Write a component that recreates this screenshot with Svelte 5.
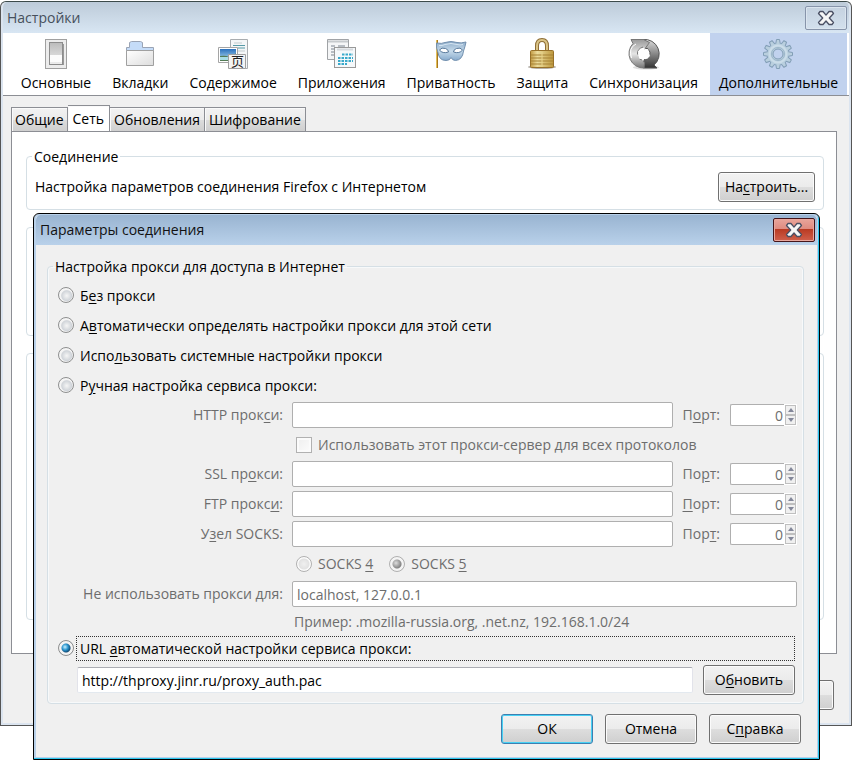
<script>
	const panes = [
		{ id: "general", label: "Основные" },
		{ id: "tabs", label: "Вкладки" },
		{ id: "content", label: "Содержимое" },
		{ id: "apps", label: "Приложения" },
		{ id: "privacy", label: "Приватность" },
		{ id: "security", label: "Защита" },
		{ id: "sync", label: "Синхронизация" },
		{ id: "advanced", label: "Дополнительные" },
	];
	const tabs = ["Общие", "Сеть", "Обновления", "Шифрование"];

	// labels are split in three so the access key can be underlined
	const modes = [
		{ value: "none", text: ["Б", "е", "з прокси"] },
		{ value: "detect", text: ["А", "в", "томатически определять настройки прокси для этой сети"] },
		{ value: "system", text: ["Испо", "л", "ьзовать системные настройки прокси"] },
		{ value: "manual", text: ["Р", "у", "чная настройка сервиса прокси:"] },
	];
	const hosts = [
		{ id: "http", text: ["HTTP прок", "с", "и:"], port: ["П", "о", "рт:"] },
		{ id: "ssl", text: ["SSL пр", "о", "кси:"], port: ["По", "р", "т:"] },
		{ id: "ftp", text: ["FTP прокс", "и", ":"], port: ["", "П", "орт:"] },
		{ id: "socks", text: ["У", "з", "ел SOCKS:"], port: ["Пор", "т", ":"] },
	];
	const teeth = [0, 30, 60, 90, 120, 150, 180, 210, 240, 270, 300, 330];

	let pane = $state("advanced");
	let tab = $state("Сеть");
	let mode = $state("url");
	let socks = $state("5");
	let url = $state("http://thproxy.jinr.ru/proxy_auth.pac");
	let manual = $derived(mode === "manual");
</script>

{#snippet keyed(t)}{t[0]}<u>{t[1]}</u>{t[2]}{/snippet}

{#snippet cross()}
	<svg width="20" height="16" viewBox="0 0 20 16" aria-hidden="true">
		<path d="M4 1.5h3l3 3.6 3-3.6h3l1.500 2L13.300 8l4.200 4.500-1.500 2h-3L10 11l-3 3.500H4l-1.500-2L6.700 8 2.500 3.500z" fill="#f6f6f6" stroke="#4b5064" stroke-width="1.300" stroke-linejoin="round" />
	</svg>
{/snippet}

{#snippet icon(id)}
	<svg width="34" height="32" viewBox="0 0 34 32" aria-hidden="true">
		{#if id === "general"}
			<rect x="6.500" y="1.500" width="21" height="29" fill="#ececec" stroke="#a0a0a0" />
			<path d="M12 6h13v21H12z" fill="#999" />
			<rect x="10.500" y="4.500" width="13" height="22" fill="url(#sw)" stroke="#8c8c8c" />
			<path d="M11 17h12v7H11z" fill="#fcfcfc" />
		{:else if id === "tabs"}
			<path d="M3.500 16V9.500h3v-5l2-1h9l2 1v5h11V16z" fill="#c5dcf8" stroke="#9aa4b5" />
			<path d="M3.500 12.500h27v15h-27z" fill="url(#paper)" stroke="#a0a0a0" />
		{:else if id === "content"}
			<path d="M14.500 1.500h17v29h-17z" fill="#f4f6f7" stroke="#a9adb0" />
			<path d="M18 5h8M17 13h12" stroke="#c3cccf" />
			<path d="M17 7.500h12M22 10h7" stroke="#579aa6" />
			<path d="M2.500 9.500h19v15h-19z" fill="#fff" stroke="#a5a5a5" />
			<path d="M4 11h16v12H4z" fill="url(#sky)" />
			<path d="M4 18q6-1 9 1t7-4v8H4z" fill="#527b55" />
			<path d="M4 19h9l3 3H4z" fill="#a7dce5" />
			<path d="M12.500 16.500h17v14h-17z" fill="#f4f4f4" stroke="#a0a0a0" />
			<text x="15" y="28" class="glyph">页</text>
		{:else if id === "apps"}
			<path d="M2.500 1.500h21v20h-21z" fill="#f5f6f7" stroke="#a0a3a6" />
			<path d="M3 3.500h20" stroke="#c6cacd" stroke-width="2" />
			<path d="M6 8h4M13 8h7M6 11h4M6 14h3M6 17h3" stroke="#7a8490" />
			<rect x="9.500" y="9.500" width="21" height="20" fill="#f5f8fa" stroke="#999" />
			<path d="M12 11.500h16" stroke="#d6dade" stroke-width="2" />
			<path d="M17 16.500h11M13 20h15M13 23h15M13 26h9" stroke="#38a9cb" stroke-width="2" stroke-dasharray="2.500 1" />
		{:else if id === "privacy"}
			<path d="M3 2v28" stroke="#a8781c" stroke-width="2" />
			<path d="M2.500 2v28" stroke="#e2bd58" />
			<path d="M2.500 5Q8 6 11 4.500q6-2 12 0 4 1 9-.500-1 5-2.500 9-1 9-8 9.500-3 0-4.500-3-1 3-5 3-7 0-8-8-2-4-1.500-9.500z" fill="url(#mask)" stroke="#718fae" />
			<path d="M5.500 12q2-3 6-1.500 3 1 3 3.500-6 2-9-2zM28.500 12q-2-3-6-1.500-3 1-3 3.500 6 2 9-2z" fill="#fff" stroke="#56789b" />
			<path d="M5 7.500q3 .500 6-1 6-2 12 0 3 1 6 0" stroke="#d5e5f2" fill="none" />
		{:else if id === "security"}
			<ellipse cx="17" cy="29" rx="14" ry="2" fill="#b5b0aa" />
			<path d="M12 14V8q0-6 5-6t5 6v6" fill="none" stroke="#8e6e35" stroke-width="4" />
			<path d="M12 14V8q0-6 5-6t5 6v6" fill="none" stroke="#dac487" stroke-width="2" />
			<rect x="5.500" y="12.500" width="23" height="17" rx="1" fill="url(#gold)" stroke="#987129" />
			<path d="M6 17h22M6 20h22M6 23h22M6 26h22" stroke="#a58134" />
			<path d="M17 14v15" stroke="#e9d48a" />
		{:else if id === "sync"}
			<ellipse cx="19" cy="29.500" rx="13" ry="2" fill="#ddd" />
			<path d="M16 1.500A14.500 14.500 0 0 1 27 27l3 3H16.500L13 25l3-5 2 2q5-2 5-8l-3-4-1 1-3-5z" fill="url(#steelB)" stroke="#555" />
			<path d="M17 30A14.500 14.500 0 0 1 6 5.500L4 1.500h12.500l6 3L17 12l-1-3q-6 2-5.500 7l1 1 1 4 2 1 1-1 2 4z" fill="url(#steelA)" stroke="#777" />
			<path d="M4.500 20Q1 10 9 6" stroke="#fff" fill="none" />
			<path d="m17 9 1 3 3-1 1 4 1 3-3 3-2-1-2 3-2-3-2 1-1-4 1-2-1-2 3-1z" fill="#fff" />
		{:else}
			<g fill="#b9cfde" stroke="#829eb6">
				{#each teeth as a}
					<path d="M14.500 7l1-5.500h3l1 5.500z" transform="rotate({a} 17 16)" />
				{/each}
			</g>
			<circle cx="17" cy="16" r="10.500" fill="#b9cfde" />
			<circle cx="17" cy="16" r="8.500" fill="none" stroke="#cbdde9" stroke-width="2" />
			<circle cx="17" cy="16" r="5" fill="#c1d2ee" stroke="#829eb6" />
			<circle cx="17" cy="16" r="6.500" fill="none" stroke="#9cb6ca" />
		{/if}
	</svg>
{/snippet}

<svg class="defs" width="0" height="0" aria-hidden="true">
	<defs>
		<linearGradient id="sw" x2="0" y2="1"><stop stop-color="#bbb" /><stop offset="1" stop-color="#eee" /></linearGradient>
		<linearGradient id="paper" x2="1" y2="1"><stop stop-color="#fff" /><stop offset="1" stop-color="#ddd" /></linearGradient>
		<linearGradient id="sky" x2="0" y2="1"><stop stop-color="#2a70bd" /><stop offset="1" stop-color="#b9e4f5" /></linearGradient>
		<linearGradient id="mask" x2="0" y2="1"><stop stop-color="#8eacc9" /><stop offset=".5" stop-color="#c5daea" /><stop offset="1" stop-color="#88abcd" /></linearGradient>
		<linearGradient id="gold"><stop stop-color="#c39b44" /><stop offset=".3" stop-color="#ecdc9c" /><stop offset="1" stop-color="#bd973c" /></linearGradient>
		<linearGradient id="steelA" x2="0" y2="1"><stop stop-color="#999" /><stop offset=".5" stop-color="#e5e5e5" /><stop offset="1" stop-color="#777" /></linearGradient>
		<linearGradient id="steelB" x2="0" y2="1"><stop stop-color="#ddd" /><stop offset=".5" stop-color="#888" /><stop offset="1" stop-color="#333" /></linearGradient>
	</defs>
</svg>

<div class="desktop">
	<main class="window">
		<header class="titlebar">
			<span>Настройки</span>
			<button class="close" aria-label="Закрыть">{@render cross()}</button>
		</header>

		<nav class="toolbar">
			{#each panes as p}
				<button class="pane" class:active={pane === p.id} onclick={() => (pane = p.id)}>
					{@render icon(p.id)}
					<span>{p.label}</span>
				</button>
			{/each}
		</nav>

		<div class="content">
			<div class="tabs" role="tablist">
				{#each tabs as t}
					<button class="tab" role="tab" aria-selected={tab === t} class:selected={tab === t} onclick={() => (tab = t)}>{t}</button>
				{/each}
			</div>
			<div class="panel">
				<fieldset class="group">
					<legend>Соединение</legend>
					<div class="connection">
						<span>Настройка параметров соединения Firefox с Интернетом</span>
						<button class="btn setup">{@render keyed(["На", "с", "троить..."])}</button>
					</div>
				</fieldset>
				<div class="box cache"></div>
				<div class="box offline"></div>
			</div>
			<div class="actions back">
				<button class="btn" aria-label="Справка"></button>
			</div>
		</div>
	</main>

	<div class="dialog" role="dialog" aria-labelledby="dialog-title">
		<header class="titlebar">
			<span id="dialog-title">Параметры соединения</span>
			<button class="close red" aria-label="Закрыть">{@render cross()}</button>
		</header>
		<div class="body">
			<fieldset class="group proxy">
				<legend>Настройка прокси для доступа в Интернет</legend>
				{#each modes as m}
					<label class="mode">
						<input type="radio" name="mode" value={m.value} bind:group={mode} />
						<span>{@render keyed(m.text)}</span>
					</label>
				{/each}

				<div class="manual">
					{#each hosts as h}
						<label class="name" for={h.id}><span>{@render keyed(h.text)}</span></label>
						<input class="text" type="text" id={h.id} disabled={!manual} />
						<label class="port" for="{h.id}-port"><span>{@render keyed(h.port)}</span></label>
						<div class="spin">
							<input type="number" id="{h.id}-port" value="0" disabled={!manual} />
							<div class="arrows">
								<button class="up" aria-label="Больше" tabindex="-1" disabled={!manual}></button>
								<button class="down" aria-label="Меньше" tabindex="-1" disabled={!manual}></button>
							</div>
						</div>
						{#if h.id === "http"}
							<label class="option share">
								<input type="checkbox" disabled={!manual} />
								<span>Использовать этот прокси-сервер для всех протоколов</span>
							</label>
						{/if}
					{/each}
					<div class="option">
						<label>
							<input type="radio" name="socks" value="4" bind:group={socks} disabled={!manual} />
							<span>SOCKS <u>4</u></span>
						</label>
						<label>
							<input type="radio" name="socks" value="5" bind:group={socks} disabled={!manual} />
							<span>SOCKS <u>5</u></span>
						</label>
					</div>
					<label class="name" for="bypass"><span>{@render keyed(["Не использовать прокси ", "д", "ля:"])}</span></label>
					<input class="text wide" type="text" id="bypass" value="localhost, 127.0.0.1" disabled={!manual} />
					<span class="example">Пример: .mozilla-russia.org, .net.nz, 192.168.1.0/24</span>
				</div>

				<label class="mode auto">
					<input type="radio" name="mode" value="url" bind:group={mode} />
					<span class="focus">{@render keyed(["URL ", "а", "втоматической настройки сервиса прокси:"])}</span>
				</label>
				<div class="reload">
					<input class="text" type="text" aria-label="URL" bind:value={url} />
					<button class="btn">{@render keyed(["О", "б", "новить"])}</button>
				</div>
			</fieldset>
			<div class="actions">
				<button class="btn default">ОК</button>
				<button class="btn">Отмена</button>
				<button class="btn">{@render keyed(["С", "п", "равка"])}</button>
			</div>
		</div>
	</div>
</div>

<style>
	:global(body) {
		margin: 0;
		background: #fff;
	}
	* {
		box-sizing: border-box;
	}
	.defs {
		position: absolute;
	}
	.desktop {
		position: relative;
		padding: 1px 0 34px;
		font: 14px/20px "Open Sans", "Noto Sans", sans-serif;
		color: #000;
	}
	button, input {
		font: inherit;
		color: inherit;
		margin: 0;
	}
	u {
		text-underline-offset: 2px;
	}
	.glyph {
		font: 13px "Noto Sans CJK SC", sans-serif;
		fill: #222;
	}

	/* window frames */
	.window {
		border: 1px solid #555;
		border-top-color: #3c4a4a;
		border-radius: 6px 6px 0 0;
		box-shadow: inset 0 0 0 2px #dbe4ef;
		padding: 0 2px 2px;
		background: #f0f0f0;
	}
	.titlebar {
		display: flex;
		align-items: center;
		justify-content: space-between;
		height: 31px;
		padding: 0 2px 0 4px;
		background: linear-gradient(#bdcbd9, #d8e6f3);
		border-radius: 5px 5px 0 0;
		color: #46505c;
	}
	.close {
		display: flex;
		align-items: center;
		justify-content: center;
		width: 42px;
		height: 24px;
		padding: 0;
		background: linear-gradient(#c5d2e0, #d3e0ed);
		border: 1px solid #8794aa;
		border-radius: 2px;
		box-shadow: inset 0 0 0 1px #dbe5ef;
	}
	.close.red {
		background: linear-gradient(#e9a59b 0, #df8b80 45%, #b93a22 46%, #d0604c);
		border-color: #45151a;
		box-shadow: inset 0 0 0 1px #e9a79d;
	}

	.toolbar {
		display: flex;
		justify-content: flex-end;
		gap: 3px;
		height: 63px;
		padding-right: 2px;
		background: #fff;
		border-bottom: 1px solid #8c8e94;
	}
	.pane {
		display: flex;
		flex-direction: column;
		align-items: center;
		gap: 3px;
		padding: 5px 9px 0;
		border: 0;
		background: none;
		white-space: nowrap;
	}
	.pane.active {
		background: #c1d2ee;
	}

	.content {
		padding: 9px 12px 13px 8px;
	}
	.tabs {
		display: flex;
		align-items: flex-end;
		height: 26px;
	}
	.tab {
		height: 24px;
		padding: 0 4px;
		border: 1px solid #8c8e94;
		border-width: 1px 1px 0 0;
		background: linear-gradient(#f2f2f2, #ebebeb 50%, #ddd 51%, #cfcfcf);
		box-shadow: inset 1px 1px #fafafa;
	}
	.tab:first-child {
		padding: 0 3px;
		border-left-width: 1px;
	}
	.tab.selected {
		height: 26px;
		padding: 0 5px;
		background: #fff;
	}
	.panel {
		padding: 13px 12px 33px 14px;
		border: 1px solid #8c8e94;
		background: #fff;
	}
	.group {
		min-width: 0;
		margin: 0;
		padding: 5px 8px 7px;
		border: 1px solid #d5dfe5;
		border-radius: 4px;
	}
	legend {
		margin-left: -3px;
		padding: 2px 2px 0;
	}
	.box {
		margin-top: 17px;
		border: 1px solid #d5dfe5;
		border-radius: 4px;
	}
	.cache {
		height: 109px;
	}
	.offline {
		height: 267px;
	}
	.connection {
		display: flex;
		align-items: center;
		justify-content: space-between;
	}

	.btn {
		flex: none;
		width: 92px;
		height: 30px;
		padding: 0;
		border: 1px solid #707070;
		border-radius: 3px;
		background: linear-gradient(#f2f2f2, #ebebeb 50%, #ddd 51%, #cfcfcf);
		box-shadow: inset 0 0 0 1px #fbfbfb;
	}
	.setup {
		width: 97px;
	}
	.default {
		border-color: #3c7fb1;
		box-shadow: inset 0 0 0 1px #48d1f4;
	}
	.actions {
		display: flex;
		justify-content: flex-end;
		gap: 12px;
		padding: 10px 3px 0 0;
	}
	.back {
		padding-top: 26px;
	}

	/* connection dialog, lies over the settings window */
	.dialog {
		position: absolute;
		top: 213px;
		left: 33px;
		right: 32px;
		border: 1px solid #000;
		border-radius: 6px 6px 0 0;
		background: #f0f0f0;
		box-shadow: inset -1px -1px #2cc7ee, inset 0 0 0 2px #b9d1ea;
		padding: 1px 2px 2px;
	}
	.dialog .titlebar {
		height: 30px;
		background: linear-gradient(#99b4d1, #b9d1ea);
		color: #111;
	}
	.body {
		padding: 10px 13px 13px 11px;
	}
	.proxy {
		padding: 4px 6px 8px 10px;
		box-shadow: inset 0 0 0 1px #f7f9fa;
	}
	.proxy legend {
		margin-left: -5px;
	}
	.mode {
		display: flex;
		align-items: center;
		gap: 6px;
		height: 30px;
	}
	.manual {
		display: grid;
		grid-template-columns: 225px 1fr auto auto;
		grid-template-rows: 26px 25px repeat(5, 26px) 22px;
		row-gap: 4px;
		align-items: center;
		margin-top: 1px;
		color: #6d6d6d;
	}
	.name {
		text-align: right;
	}
	.text {
		min-width: 0;
		height: 26px;
		padding: 0 4px;
		border: 1px solid #afafaf;
		border-radius: 2px;
		background: #fff;
	}
	.manual .text {
		margin-left: 9px;
	}
	.manual .wide {
		grid-column: 2 / -1;
	}
	.port {
		padding: 0 10px;
	}
	.option {
		grid-column: 2 / -1;
		display: flex;
		align-items: center;
		gap: 16px;
		padding-left: 13px;
	}
	.option label, .share {
		display: flex;
		align-items: center;
		gap: 6px;
	}
	.example {
		grid-column: 2 / -1;
		padding-left: 11px;
	}

	.spin {
		display: flex;
		align-items: center;
	}
	.spin input {
		width: 54px;
		height: 22px;
		padding: 0 1px 0 0;
		border: 1px solid #afafaf;
		border-right: 0;
		border-radius: 2px 0 0 2px;
		background: #fff;
		text-align: right;
		appearance: textfield;
	}
	.spin input::-webkit-inner-spin-button {
		display: none;
	}
	.arrows {
		display: grid;
		width: 13px;
		padding: 1px;
		background: #fff;
	}
	.arrows button {
		display: grid;
		place-items: center;
		height: 10px;
		padding: 0;
		border: 1px solid #bfbfbf;
		background: #f0f0f0;
	}
	.arrows button::before {
		content: "";
		border: 3px solid transparent;
		border-top-width: 0;
		border-bottom: 4px solid #838799;
	}
	.arrows .down::before {
		transform: rotate(180deg);
	}

	input[type="radio"] {
		appearance: none;
		flex: none;
		width: 16px;
		height: 16px;
		border: 1px solid #8e8f8f;
		border-radius: 50%;
		background: radial-gradient(circle at 55% 55%, #f6f6f6 0, #d0d4d9 5px, #f4f4f4 6px);
	}
	input[type="radio"]:checked {
		background: radial-gradient(circle at 5px 5px, #c9f1ff 0, #2b95cf 3px, #0c3a5f 6px) center / 9px 9px no-repeat, #f4f4f4;
		background: radial-gradient(circle, transparent 4px, #f4f4f4 5px), radial-gradient(circle at 6px 6px, #c9f1ff 0, #2b95cf 3px, #0c3a5f 6px);
	}
	input[type="radio"]:disabled {
		border-color: #b1b1b1;
		background: radial-gradient(circle, #f0f0f0 0, #e2e2e2 5px, #fbfbfb 6px);
	}
	input[type="radio"]:disabled:checked {
		background: radial-gradient(circle, transparent 4px, #f4f4f4 5px), radial-gradient(circle at 6px 6px, #ddd 0, #aaa 3px, #777 6px);
	}
	.mode input {
		margin-bottom: 2px;
	}
	input[type="checkbox"] {
		appearance: none;
		width: 16px;
		height: 16px;
		border: 1px solid #b1b1b1;
		background: linear-gradient(135deg, #eee, #fcfcfc);
		box-shadow: inset 0 0 0 2px #fbfbfb;
	}

	.auto {
		gap: 2px;
		height: 25px;
		margin-top: 3px;
		padding-right: 2px;
	}
	.focus {
		flex: 1;
		height: 25px;
		padding: 2px 3px;
		border: 1px dotted #333;
	}
	.reload {
		display: flex;
		align-items: center;
		gap: 10px;
		margin-top: 4px;
		padding: 0 2px 0 19px;
	}
	.reload .text {
		flex: 1;
		border-color: #abadb3 #e2e3ea #e3e9ef;
	}
</style>
